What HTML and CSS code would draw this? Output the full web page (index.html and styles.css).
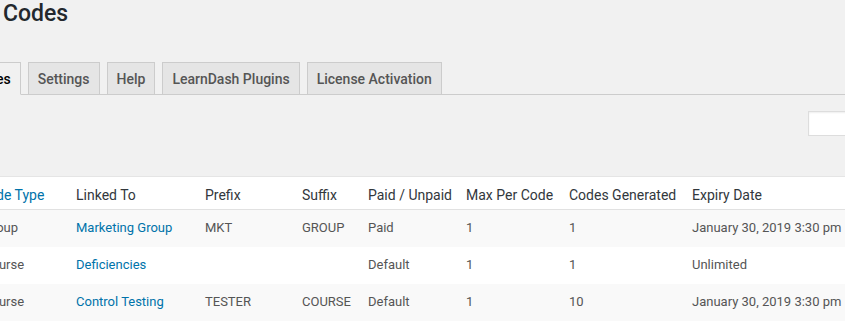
FILE: index.html
```html
<!DOCTYPE html>
<html lang="en">
<head>
<meta charset="utf-8">
<title>Codes</title>
<link rel="stylesheet" href="styles.css">
</head>
<body>
<div class="wrap">
  <h1 class="page-title">Codes</h1>
  <nav class="nav-tabs">
    <a class="nav-tab active" href="#">Codes</a>
    <a class="nav-tab" href="#">Settings</a>
    <a class="nav-tab" href="#">Help</a>
    <a class="nav-tab" href="#">LearnDash Plugins</a>
    <a class="nav-tab" href="#">License Activation</a>
  </nav>
  <div class="search-row">
    <input class="search-input" type="search" aria-label="Search codes">
  </div>
  <table class="codes-table">
    <colgroup>
      <col class="c1"><col class="c2"><col class="c3"><col class="c4"><col class="c5"><col class="c6"><col class="c7"><col class="c8">
    </colgroup>
    <thead>
      <tr>
        <th><a href="#">Code Type</a></th>
        <th>Linked To</th>
        <th>Prefix</th>
        <th>Suffix</th>
        <th>Paid / Unpaid</th>
        <th>Max Per Code</th>
        <th>Codes Generated</th>
        <th>Expiry Date</th>
      </tr>
    </thead>
    <tbody>
      <tr>
        <td>Group</td>
        <td><a href="#">Marketing Group</a></td>
        <td>MKT</td>
        <td>GROUP</td>
        <td>Paid</td>
        <td>1</td>
        <td>1</td>
        <td>January 30, 2019 3:30 pm</td>
      </tr>
      <tr>
        <td>Course</td>
        <td><a href="#">Deficiencies</a></td>
        <td></td>
        <td></td>
        <td>Default</td>
        <td>1</td>
        <td>1</td>
        <td>Unlimited</td>
      </tr>
      <tr>
        <td>Course</td>
        <td><a href="#">Control Testing</a></td>
        <td>TESTER</td>
        <td>COURSE</td>
        <td>Default</td>
        <td>1</td>
        <td>10</td>
        <td>January 30, 2019 3:30 pm</td>
      </tr>
    </tbody>
  </table>
</div>
</body>
</html>
```

FILE: styles.css
```css
html, body {
  margin: 0;
  padding: 0;
}
body {
  background: #f1f1f1;
  color: #444;
  font-family: Roboto, "Noto Sans", "Liberation Sans", sans-serif;
  width: 845px;
  height: 321px;
  overflow: hidden;
}
.wrap {
  width: 845px;
}
.page-title {
  margin: 0;
  padding: 0 0 0 3px;
  font-size: 23px;
  font-weight: 500;
  line-height: 28px;
  color: #23282d;
}
.nav-tabs {
  display: flex;
  gap: 7px;
  margin: 34px 0 0 -39px;
  border-bottom: 1px solid #ccc;
  width: 884px;
}
.nav-tab {
  display: block;
  padding: 4px 9px 3px;
  margin-bottom: -1px;
  border: 1px solid #ccc;
  background: #e5e5e5;
  color: #555;
  font-size: 14px;
  font-weight: 500;
  line-height: 24px;
  text-decoration: none;
  white-space: nowrap;
}
.nav-tab.active {
  background: #f1f1f1;
  border-bottom-color: #f1f1f1;
  color: #000;
}
.search-row {
  display: flex;
  padding: 16px 0 0 808px;
}
.search-input {
  box-sizing: border-box;
  width: 150px;
  height: 25px;
  margin: 0;
  border: 1px solid #ddd;
  background: #fff;
  box-shadow: inset 0 1px 2px rgba(0,0,0,.07);
  flex-shrink: 0;
}
.codes-table {
  margin: 40px 0 0 -27px;
  width: 1000px;
  table-layout: fixed;
  border-collapse: collapse;
  background: #fff;
  border-top: 1px solid #e5e5e5;
}
.c1 { width: 93px; }
.c2 { width: 129px; }
.c3 { width: 97px; }
.c4 { width: 66px; }
.c5 { width: 98px; }
.c6 { width: 103px; }
.c7 { width: 123px; }
.c8 { width: 291px; }
.codes-table th {
  text-align: left;
  font-weight: 400;
  font-size: 14px;
  line-height: 20px;
  color: #32373c;
  padding: 8px 10px 4px;
  border-bottom: 1px solid #e1e1e1;
  white-space: nowrap;
}
.codes-table th:first-child {
  padding-left: 6px;
}
.codes-table td {
  font-size: 13px;
  line-height: 19px;
  color: #555;
  padding: 8px 10px 10px;
  white-space: nowrap;
}
.codes-table tbody tr:nth-child(odd) {
  background: #f9f9f9;
}
.codes-table a {
  color: #0073aa;
  text-decoration: none;
}
```
